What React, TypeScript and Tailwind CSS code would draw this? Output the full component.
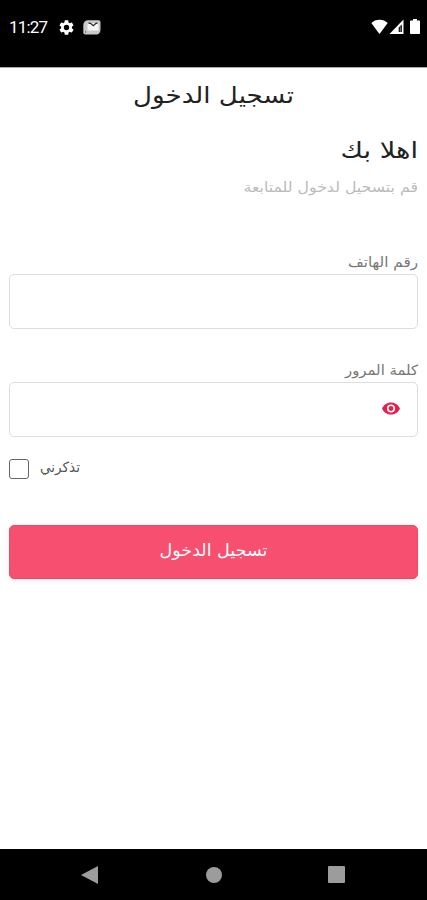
import type { ReactNode } from 'react';

function StatusBar() {
    return (
        <div
            dir="ltr"
            className="flex h-[67px] items-start justify-between bg-black pt-[18px] pr-[7px] pl-[9px] text-white"
        >
            <div className="flex items-center">
                <span className="w-[39px] font-['Roboto',sans-serif] text-[17px] leading-[19px] tracking-[-0.8px] whitespace-nowrap">
                    11:27
                </span>
                {/* Settings */}
                <svg viewBox="2 2 20 20" className="ml-[11px] size-[15px]" fill="currentColor">
                    <path d="M19.14 12.94c.04-.3.06-.61.06-.94s-.02-.64-.07-.94l2.03-1.58a.5.5 0 0 0 .12-.61l-1.92-3.32a.49.49 0 0 0-.59-.22l-2.39.96a7 7 0 0 0-1.62-.94l-.36-2.54a.48.48 0 0 0-.48-.41h-3.84a.47.47 0 0 0-.47.41l-.36 2.54c-.59.24-1.13.57-1.62.94l-2.39-.96a.48.48 0 0 0-.59.22L2.74 8.87a.48.48 0 0 0 .12.61l2.03 1.58c-.05.3-.09.63-.09.94s.02.64.07.94l-2.03 1.58a.5.5 0 0 0-.12.61l1.92 3.32c.12.22.37.29.59.22l2.39-.96c.5.38 1.03.7 1.62.94l.36 2.54c.05.24.24.41.48.41h3.84c.24 0 .44-.17.47-.41l.36-2.54c.59-.24 1.13-.56 1.62-.94l2.39.96c.22.08.47 0 .59-.22l1.92-3.32a.47.47 0 0 0-.12-.61zM12 15.6a3.6 3.6 0 1 1 0-7.2 3.6 3.6 0 0 1 0 7.2z" />
                </svg>
                {/* Stacked mail notification */}
                <svg viewBox="0 0 18 15" className="ml-[9px] h-[15px] w-[18px]" fill="none">
                    <path
                        d="M4.500.3h11c1.200 0 2 .8 2 2v7.500c0 2.500-1.700 4.700-3.500 4.700H2.300C1 14.500.3 13.800.3 12.500V5C.3 2.500 2 .3 4.500.3z"
                        fill="#c9c9c9"
                    />
                    <path d="M4.500 3.200h11v7.300h-11z" fill="#f5f5f5" />
                    <path d="M5.500 3.200l2 .2 2.800 2.300 2.700-2.300 1.500-.2" stroke="#222" strokeWidth="1.200" />
                    <path d="M2.500 11.500v1" stroke="#222" strokeWidth="1" />
                </svg>
            </div>
            <div className="flex items-center pt-[1px]">
                <svg viewBox="0 0 17 15" className="h-[15px] w-[17px]" fill="currentColor">
                    <path d="M8.500 15L.3 4.100C2.400 1.900 5.200.7 8.500.7s6.100 1.200 8.200 3.400z" />
                </svg>
                <svg viewBox="0 0 15 15" className="ml-[1px] h-[15px] w-[15px]">
                    <path d="M14.500.5V15H.5z" fill="#fff" />
                    <path d="M12.800 5.500v7.500H9.700V8.600z" fill="#000" />
                    <path d="M11.300 7.500v5.500" stroke="#bbb" strokeWidth="0.700" />
                </svg>
                <svg viewBox="0 0 10 15" className="ml-[6px] h-[15px] w-[10px]" fill="currentColor">
                    <path d="M3 0h4v1.500h2c.6 0 1 .4 1 1V14c0 .6-.4 1-1 1H1c-.6 0-1-.4-1-1V2.500c0-.6.4-1 1-1h2z" />
                </svg>
            </div>
        </div>
    );
}

function Field({ label, children }: { label: ReactNode; children?: ReactNode }) {
    return (
        <label className="block">
            <span className="block h-[24px] text-[14px] leading-[24px] text-[#777]">{label}</span>
            <span className="flex h-[55px] items-center rounded-[5px] border border-[#dcdde0] bg-white px-[17px] pb-[2px]">
                {children}
            </span>
        </label>
    );
}

function NavigationBar() {
    return (
        <div dir="ltr" className="flex h-[51px] items-center bg-black pl-[81px] text-[#9c9c9c]">
            <svg viewBox="0 0 17 18" className="h-[18px] w-[17px]" fill="currentColor">
                <path d="M17 0v18L0 9z" />
            </svg>
            <div className="ml-[108px] size-[16px] rounded-full bg-[#9c9c9c]" />
            <div className="ml-[106px] size-[17px] rounded-[1px] bg-[#9c9c9c]" />
        </div>
    );
}

export default function App() {
    return (
        <div
            dir="rtl"
            className="flex h-[900px] w-[427px] flex-col overflow-hidden bg-white font-['DejaVu_Sans',sans-serif]"
        >
            <StatusBar />
            <main className="flex-1 border-t border-[#aaa] px-[9px]">
                <h1 className="h-[54px] scale-x-[1.135] text-center text-[23px] leading-[54px] text-[#222]">
                    تسجيل الدخول
                </h1>
                <h2 className="mt-[10px] h-[36px] origin-right scale-x-[1.185] text-[23px] leading-[36px] text-[#222]">
                    اهلا بك
                </h2>
                <p className="mt-[6px] h-[26px] origin-right scale-x-[1.125] text-[14px] leading-[26px] text-[#bbb]">
                    قم بتسحيل لدخول للمتابعة
                </p>

                <div className="mt-[50px]">
                    <Field label={<span className="block origin-right scale-x-[1.085]">رقم الهاتف</span>} />
                </div>
                <div className="mt-[29px]">
                    <Field label={<span className="block origin-right scale-x-[1.06]">كلمة المرور</span>}>
                        <svg viewBox="1 4 22 16" className="h-[13px] w-[18px]" fill="#e91e50">
                            <path d="M12 4.500C7 4.500 2.730 7.610 1 12c1.730 4.390 6 7.500 11 7.500s9.270-3.110 11-7.500c-1.730-4.390-6-7.500-11-7.500zM12 17a5 5 0 1 1 0-10 5 5 0 0 1 0 10zm0-8a3 3 0 1 0 0 6 3 3 0 0 0 0-6z" />
                        </svg>
                    </Field>
                </div>

                <div dir="ltr" className="mt-[21px] flex h-[22px] items-center">
                    <span className="size-[20px] rounded-[3px] border border-[#666]" />
                    <span className="ml-[11px] origin-left scale-x-[0.97] pb-[4px] text-[14px] leading-[18px] text-[#555]">
                        تذكرني
                    </span>
                </div>

                <button className="mt-[45px] block h-[54px] w-full rounded-[5px] border border-[#ef4868] bg-[#f74f6f] pb-[3px] text-[17px] text-white shadow-[0_2px_6px_rgba(0,0,0,0.06)]">
                    <span className="block scale-x-[1.03]">تسجيل الدخول</span>
                </button>
            </main>
            <NavigationBar />
        </div>
    );
}
